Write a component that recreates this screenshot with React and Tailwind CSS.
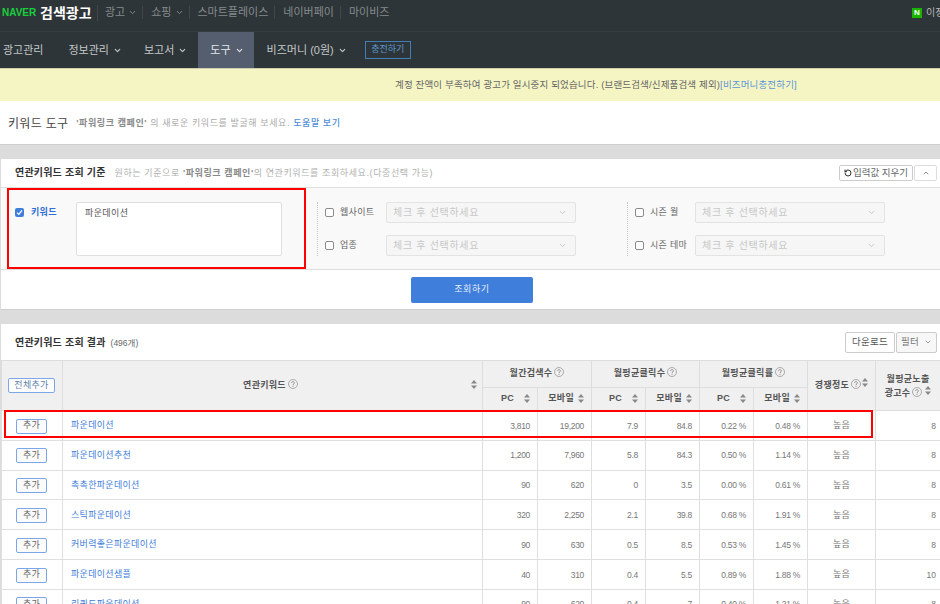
import { ChevronDown, ChevronUp, RotateCcw } from 'lucide-react';

const rows = [
  ['파운데이션', '3,810', '19,200', '7.9', '84.8', '0.22 %', '0.48 %', '높음', '8'],
  ['파운데이션추천', '1,200', '7,960', '5.8', '84.3', '0.50 %', '1.14 %', '높음', '8'],
  ['촉촉한파운데이션', '90', '620', '0', '3.5', '0.00 %', '0.61 %', '높음', '8'],
  ['스틱파운데이션', '320', '2,250', '2.1', '39.8', '0.68 %', '1.91 %', '높음', '8'],
  ['커버력좋은파운데이션', '90', '630', '0.5', '8.5', '0.53 %', '1.45 %', '높음', '8'],
  ['파운데이션샘플', '40', '310', '0.4', '5.5', '0.89 %', '1.88 %', '높음', '10'],
  ['리퀴드파운데이션', '90', '620', '0.4', '7', '0.40 %', '1.21 %', '높음', '8'],
];

function Sort({ className = '' }) {
  return (
    <svg width="6" height="9" viewBox="0 0 6 9" className={`inline-block ${className}`}>
      <path d="M3 0 6 3.5H0Z M3 9 0 5.5H6Z" fill="#888" />
    </svg>
  );
}

function Help() {
  return (
    <svg width="10" height="10" viewBox="0 0 10 10" className="ml-0.5 inline-block align-[-1px]">
      <circle cx="5" cy="5" r="4.5" fill="none" stroke="#999" strokeWidth="0.8" />
      <path d="M3.6 4C3.6 2.2 6.4 2.2 6.4 3.9 6.4 4.9 5 4.9 5 6M5 6.8V7.8" fill="none" stroke="#888" strokeWidth="0.9" />
    </svg>
  );
}

function Check({ checked }) {
  if (checked) {
    return (
      <span className="flex h-[9px] w-[9px] items-center justify-center rounded-[2px] bg-[#3f7edb]">
        <svg width="7" height="7" viewBox="0 0 7 7"><path d="M1 3.6 2.8 5.4 6 1.4" fill="none" stroke="#fff" strokeWidth="1.3" /></svg>
      </span>
    );
  }
  return <span className="block h-[9px] w-[9px] rounded-[2px] border border-[#8a8a8a] bg-white" />;
}

function Select() {
  return (
    <div className="flex h-[21px] w-[190px] items-center justify-between rounded-[2px] border border-[#e3e3e3] bg-[#f6f6f6] pl-[6px] pr-[8px] text-[10px] tracking-[0.7px] text-[#c8c8c8]">
      <span>체크 후 선택하세요</span>
      <ChevronDown size={9} color="#bbb" />
    </div>
  );
}

function Option({ label, labelWidth }) {
  return (
    <div className="flex items-center">
      <Check />
      <span className={`ml-[6px] whitespace-nowrap text-[9px] tracking-[0.3px] text-[#666] ${labelWidth}`}>{label}</span>
      <Select />
    </div>
  );
}

function TopLink({ children, arrow }) {
  return (
    <span className={`mr-[8px] flex items-center border-r border-[#40484b] text-[11px] leading-[13px] text-[#858b8d] ${arrow ? 'gap-[3px] pr-[5px]' : 'pr-[6px]'}`}>
      {children}
      {arrow && <ChevronDown size={9} strokeWidth={2.5} />}
    </span>
  );
}

function NavItem({ children, active, arrow = true, className = '' }) {
  return (
    <span className={`flex h-full items-center gap-[4px] text-[11px] ${active ? 'bg-[#555e6e] text-[#e4e6ea]' : 'text-[#c4c8ca]'} ${className}`}>
      {children}
      {arrow && <ChevronDown size={9} strokeWidth={3} />}
    </span>
  );
}

const th = 'border border-[#dddddd] bg-[#f0f0f0] p-0 text-[9px] font-bold tracking-[0.3px] text-[#555]';
const td = 'border border-[#dfdfdf] pr-[7px] pt-[1px] text-right text-[8.5px] tracking-[-0.3px] text-[#777]';

export default function App() {
  return (
    <div className="relative h-[604px] w-[940px] overflow-hidden bg-[#dcdcdc] [font-family:'Liberation_Sans','Noto_Sans_CJK_KR',sans-serif]">
      <div className="flex h-[32px] items-center border-b border-[#363d40] bg-[#2e3538] pb-[6px] pl-[2px]">
        <span className="w-[38px] text-[10px] font-black leading-none text-[#19ce3c]">NAVER</span>
        <span className="mr-[7px] w-[58px] border-r border-[#40484b] text-[14px] font-bold leading-[16px] text-white">검색광고</span>
        <TopLink arrow>광고</TopLink>
        <TopLink arrow>쇼핑</TopLink>
        <TopLink>스마트플레이스</TopLink>
        <TopLink>네이버페이</TopLink>
        <span className="text-[11px] text-[#858b8d]">마이비즈</span>
        <span className="ml-auto flex h-[10px] w-[10px] items-center justify-center bg-[#19b400] text-[8px] font-black text-white">N</span>
        <span className="ml-[4px] w-[14px] whitespace-nowrap text-[10px] text-[#b4b8ba]">이정</span>
      </div>

      <div className="flex h-[36px] items-center bg-[#2e3538] pl-[3px]">
        <NavItem arrow={false} className="mr-[25px]">광고관리</NavItem>
        <NavItem className="mr-[22px]">정보관리</NavItem>
        <NavItem className="mr-[11px]">보고서</NavItem>
        <NavItem active className="pl-[12px] pr-[10px]">도구</NavItem>
        <NavItem className="ml-[13px]">비즈머니 (0원)</NavItem>
        <span className="ml-[18px] flex h-[18px] w-[46px] items-center justify-center border border-[#3f7fb5] text-[9px] text-[#5c9ad0]">충전하기</span>
      </div>

      <div className="flex h-[33px] items-center whitespace-nowrap border-t border-[#cfcfb0] bg-[#f5f5c4] pl-[395px] text-[9.5px] tracking-[0.15px] text-[#666]">
        계정 잔액이 부족하여 광고가 일시중지 되었습니다. (브랜드검색/신제품검색 제외)
        <span className="text-[#5c95d8]">[비즈머니충전하기]</span>
      </div>

      <div className="flex h-[44px] items-center border-b border-[#cfcfcf] bg-white pl-[8px] pt-[2px]">
        <span className="text-[12px] tracking-[0.3px] text-[#444]">키워드 도구</span>
        <span className="ml-[8px] text-[9px] tracking-[0.6px] text-[#aaa]">
          <b className="text-[#888]">'파워링크 캠페인'</b> 의 새로운 키워드를 발굴해 보세요. <span className="font-medium text-[#4f8ed8]">도움말 보기</span>
        </span>
      </div>

      <div className="ml-[1px] mt-[14px] h-[151px] border-b border-[#cfcfcf] bg-white">
        <div className="flex h-[29px] items-center justify-between border-b border-[#dedede] pl-[14px] pr-[3px]">
          <div className="text-[9px] tracking-[0.6px] text-[#b0b0b0]">
            <b className="mr-[9px] text-[10px] tracking-[0.2px] text-[#333]">연관키워드 조회 기준</b>
            원하는 기준으로 <b className="text-[#888]">'파워링크 캠페인'</b>의 연관키워드를 조회하세요.(다중선택 가능)
          </div>
          <div className="flex gap-[1px]">
            <span className="flex h-[16px] w-[74px] items-center justify-center gap-[1px] rounded-[2px] border border-[#ccc] text-[9.5px] text-[#666]">
              <RotateCcw size={8} strokeWidth={3} color="#333" />입력값 지우기
            </span>
            <span className="flex h-[16px] w-[23px] items-center justify-center rounded-[2px] border border-[#ddd]">
              <ChevronUp size={8} strokeWidth={2.5} color="#777" />
            </span>
          </div>
        </div>

        <div className="flex h-[82px] items-start border-b border-[#dedede] bg-[#f9f9f9] pl-[14px] pt-[14px]">
          <div className="flex w-[302px] items-start">
            <span className="mt-[6px]"><Check checked /></span>
            <span className="ml-[7px] mt-[4px] w-[45px] text-[9px] font-bold tracking-[0.3px] text-[#2f6fd6]">키워드</span>
            <div className="h-[54px] w-[206px] rounded-[2px] border border-[#e0e0e0] bg-white px-[8px] py-[4px] text-[9px] tracking-[0.4px] text-[#555]">파운데이션</div>
          </div>
          <div className="flex h-[54px] w-[310px] flex-col justify-between border-l border-dotted border-[#c4c4c4] pl-[7px]">
            <Option label="웹사이트" labelWidth="w-[46px]" />
            <Option label="업종" labelWidth="w-[46px]" />
          </div>
          <div className="flex h-[54px] flex-col justify-between border-l border-dotted border-[#c4c4c4] pl-[7px]">
            <Option label="시즌 월" labelWidth="w-[45px]" />
            <Option label="시즌 테마" labelWidth="w-[45px]" />
          </div>
        </div>

        <div className="flex justify-center pl-[3px] pt-[7px]">
          <span className="flex h-[26px] w-[122px] items-center justify-center rounded-[2px] bg-[#3f7edb] text-[9px] tracking-[0.6px] text-[#e8f0fc]">조회하기</span>
        </div>
      </div>

      <div className="ml-[1px] mt-[14px] bg-white">
        <div className="flex h-[36px] items-center justify-between pl-[14px] pr-[3px]">
          <div className="text-[10px] tracking-[0.2px] text-[#666]">
            <b className="mr-[2px] text-[#333]">연관키워드 조회 결과</b> <span className="text-[8.5px] tracking-normal">(496개)</span>
          </div>
          <div className="flex gap-[1px]">
            <span className="flex h-[21px] w-[50px] items-center justify-center rounded-[2px] border border-[#ccc] text-[9.5px] tracking-[0.3px] text-[#555]">다운로드</span>
            <span className="flex h-[21px] w-[41px] items-center justify-center gap-[5px] rounded-[2px] border border-[#ccc] bg-[#f7f7f7] text-[9.5px] tracking-[0.3px] text-[#777]">필터 <ChevronDown size={8} /></span>
          </div>
        </div>

        <table className="w-[939px] table-fixed border-collapse">
          <colgroup>
            <col className="w-[61px]" />
            <col className="w-[420px]" />
            <col className="w-[55px]" />
            <col className="w-[54px]" />
            <col className="w-[54px]" />
            <col className="w-[54px]" />
            <col className="w-[54px]" />
            <col className="w-[54px]" />
            <col className="w-[68px]" />
            <col className="w-[65px]" />
          </colgroup>
          <thead>
            <tr className="h-[27px]">
              <th rowSpan={2} className={`${th} pr-[1px]`}>
                <span className="inline-flex h-[15px] w-[47px] items-center justify-center rounded-[2px] border border-[#7ba7ea] bg-white align-middle font-normal text-[#5d7fa8]">전체추가</span>
              </th>
              <th rowSpan={2} className={`${th} relative pr-[4px]`}>
                연관키워드<Help />
                <Sort className="absolute right-[5px] top-[19px]" />
              </th>
              <th colSpan={2} className={th}>월간검색수<Help /></th>
              <th colSpan={2} className={th}>월평균클릭수<Help /></th>
              <th colSpan={2} className={th}>월평균클릭률<Help /></th>
              <th rowSpan={2} className={th}>경쟁정도<Help /><Sort className="ml-[1px] align-[1px]" /></th>
              <th rowSpan={2} className={`${th} leading-[14px]`}>월평균노출<br />광고수<Help /><Sort className="ml-[3px] align-[1px]" /></th>
            </tr>
            <tr className="h-[23px]">
              {['PC', '모바일', 'PC', '모바일', 'PC', '모바일'].map((label, i) => (
                <th key={i} className={`${th} pr-[7px] text-right`}>
                  {label}<Sort className={label === 'PC' ? 'ml-[10px]' : 'ml-[4px]'} />
                </th>
              ))}
            </tr>
          </thead>
          <tbody>
            {rows.map((r) => (
              <tr key={r[0]} className="h-[29.8px]">
                <td className="border border-[#dfdfdf] p-0 pr-[1px] text-center">
                  <span className="inline-flex h-[15px] w-[31px] items-center justify-center rounded-[2px] border border-[#7ba7ea] bg-[#fbfbfb] align-middle text-[9px] tracking-[0.3px] text-[#666]">추가</span>
                </td>
                <td className="border border-[#dfdfdf] pl-[8px] pt-[1px] text-[9px] tracking-[0.3px] text-[#3f7edb]">{r[0]}</td>
                {r.slice(1, 7).map((v, i) => <td key={i} className={td}>{v}</td>)}
                <td className="border border-[#dfdfdf] pt-[1px] text-center text-[9px] tracking-[0.2px] text-[#777]">{r[7]}</td>
                <td className="border border-[#dfdfdf] pr-[4px] pt-[1px] text-right text-[8.5px] text-[#777]">{r[8]}</td>
              </tr>
            ))}
          </tbody>
        </table>
      </div>

      <div className="pointer-events-none absolute left-[7px] top-[188px] h-[81px] w-[299px] border-2 border-[#ff0000]" />
      <div className="pointer-events-none absolute left-[4px] top-[410px] h-[28px] w-[869px] border-2 border-[#ff0000]" />
    </div>
  );
}
